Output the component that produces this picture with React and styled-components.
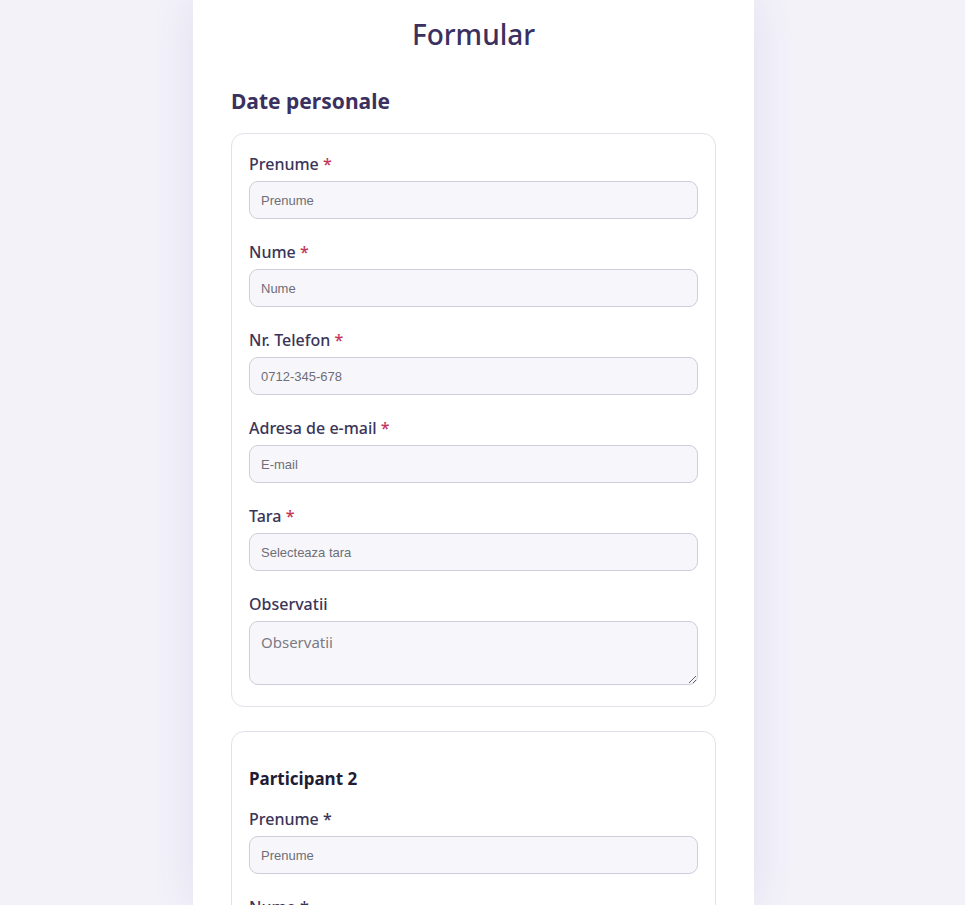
import styled, { createGlobalStyle } from "styled-components";

const GlobalStyles = createGlobalStyle`
  * { box-sizing: border-box; margin: 0; padding: 0; }
  html, body { background: #f3f2f9; }
  body { font-family: "Noto Sans", "Open Sans", sans-serif; }
  ::-webkit-scrollbar { display: none; }
`;

const personal = [
  { label: "Prenume", placeholder: "Prenume", required: true },
  { label: "Nume", placeholder: "Nume", required: true },
  { label: "Nr. Telefon", placeholder: "0712-345-678", required: true },
  { label: "Adresa de e-mail", placeholder: "E-mail", required: true },
  { label: "Tara", placeholder: "Selecteaza tara", required: true },
];

function App() {
  return (
    <>
      <GlobalStyles />
      <Page>
        <Card>
          <Title>Formular</Title>
          <SectionTitle>Date personale</SectionTitle>
          <Group>
            {personal.map((f) => (
              <Field key={f.label}>
                <Label>
                  {f.label} {f.required && <Req>*</Req>}
                </Label>
                <Input placeholder={f.placeholder} />
              </Field>
            ))}
            <Field>
              <Label>Observatii</Label>
              <TextArea placeholder="Observatii" />
            </Field>
          </Group>
          <Group $top>
            <ParticipantTitle>Participant 2</ParticipantTitle>
            <Field>
              <Label>Prenume *</Label>
              <Input placeholder="Prenume" />
            </Field>
            <Field>
              <Label>Nume *</Label>
              <Input placeholder="Nume" />
            </Field>
          </Group>
        </Card>
      </Page>
    </>
  );
}

export default App;

const Page = styled.main`
  display: flex;
  justify-content: center;
  padding-right: 18px;
  height: 905px;
  overflow: hidden;
`;

const Card = styled.section`
  width: 561px;
  background: #ffffff;
  padding: 12px 38px 40px;
  box-shadow: 0 0 40px rgba(90, 80, 170, 0.12);
  display: flex;
  flex-direction: column;
`;

const Title = styled.h1`
  text-align: center;
  color: #3a3160;
  font-size: 28px;
  font-weight: 500;
  line-height: 44px;
  margin-bottom: 30px;
`;

const SectionTitle = styled.h2`
  color: #3a3160;
  font-size: 21px;
  font-weight: 700;
  line-height: 30px;
  margin-bottom: 17px;
`;

const Group = styled.div`
  border: 1px solid #e2e1ea;
  border-radius: 13px;
  padding: ${(p) => (p.$top ? "34px 17px 21px" : "20px 17px 21px")};
  display: flex;
  flex-direction: column;
  gap: 23px;
  margin-bottom: 24px;
`;

const ParticipantTitle = styled.h3`
  color: #1f1c36;
  font-size: 17px;
  font-weight: 700;
  line-height: 26px;
  margin-bottom: -6px;
`;

const Field = styled.div`
  display: flex;
  flex-direction: column;
  gap: 7px;
`;

const Label = styled.label`
  color: #3a3558;
  font-size: 16px;
  font-weight: 500;
  line-height: 20px;
`;

const Req = styled.span`
  color: #c2365a;
`;

const Input = styled.input`
  height: 38px;
  width: 100%;
  border: 1px solid #cdcddb;
  border-radius: 9px;
  background: #f7f7fb;
  padding: 0 11px;
  font-family: "Liberation Sans", Arial, sans-serif;
  font-size: 13px;
  color: #333;
  &::placeholder { color: #6e6e78; }
`;

const TextArea = styled.textarea`
  height: 64px;
  width: 100%;
  border: 1px solid #cdcddb;
  border-radius: 9px;
  background: #f7f7fb;
  padding: 10px 11px;
  font-family: "Noto Sans", sans-serif;
  font-size: 15px;
  color: #333;
  resize: vertical;
  &::placeholder { color: #7a7a84; }
`;
